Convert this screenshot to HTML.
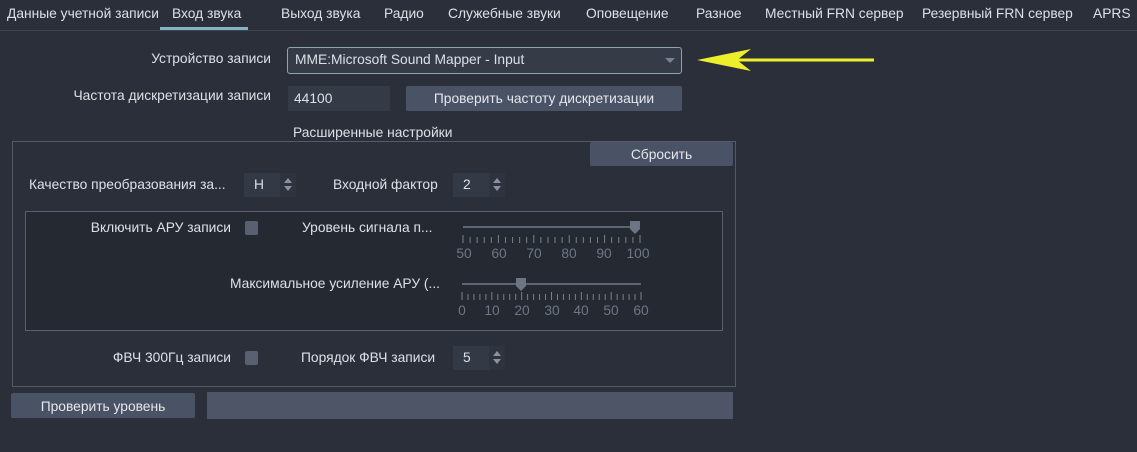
<!DOCTYPE html><html><head><meta charset="utf-8"><style>
body{margin:0;width:1137px;height:452px;background:#2b2f3a;font-family:"Liberation Sans","DejaVu Sans",sans-serif;font-size:13.8px;color:#dde0e6;position:relative;overflow:hidden}
.a{position:absolute;white-space:nowrap}
.btn{position:absolute;background:#4a5265;border-radius:2px;text-align:center;color:#e4e7ec}
.inp{position:absolute;background:#353a47}
.cb{position:absolute;width:13px;height:14px;background:#586072;border-radius:2px}
.spin{position:absolute;background:#343946;width:52px;height:24px}
.spin span{position:absolute;left:10px;top:4px}
.spin i{position:absolute;right:0;top:0;width:16px;height:24px;background:#2e333e}
.spin i:before{content:"";position:absolute;left:4px;top:5px;border:4px solid transparent;border-bottom:5px solid #8a91a0;border-top:0}
.spin i:after{content:"";position:absolute;left:4px;top:13px;border:4px solid transparent;border-top:5px solid #8a91a0;border-bottom:0}
.tk{position:absolute;color:#6e7586;transform:translateX(-50%)}
</style></head><body>
<div class="a" style="left:7px;top:6px">Данные учетной записи</div>
<div class="a" style="left:172px;top:6px">Вход звука</div>
<div class="a" style="left:281px;top:6px">Выход звука</div>
<div class="a" style="left:384px;top:6px">Радио</div>
<div class="a" style="left:448px;top:6px">Служебные звуки</div>
<div class="a" style="left:586px;top:6px">Оповещение</div>
<div class="a" style="left:696px;top:6px">Разное</div>
<div class="a" style="left:765px;top:6px">Местный FRN сервер</div>
<div class="a" style="left:922px;top:6px">Резервный FRN сервер</div>
<div class="a" style="left:1093px;top:6px">APRS</div>
<div class="a" style="left:0;top:30px;width:1137px;height:1px;background:#3e4451"></div>
<div class="a" style="left:160px;top:27px;width:88px;height:3px;background:#82b4c6"></div>

<div class="a" style="right:866px;top:51px">Устройство записи</div>
<div class="inp" style="left:287px;top:47px;width:393px;height:25px;border:1px solid #8ea4b1;border-radius:3px;background:#363b48"><span class="a" style="left:7px;top:4px">MME:Microsoft Sound Mapper - Input</span><span class="a" style="right:6px;top:10px;border:5px solid transparent;border-top:5px solid #7a8190;border-bottom:0"></span></div>
<svg class="a" style="left:690px;top:44px" width="190" height="32"><path d="M14 16 L184 16" stroke="#ecef2a" stroke-width="3"/><path d="M7 16 L61 5 L47 16 L61 27 Z" fill="#ecef2a"/></svg>
<div class="a" style="right:866px;top:88px">Частота дискретизации записи</div>
<div class="inp" style="left:288px;top:86px;width:102px;height:25px"><span class="a" style="left:6px;top:5px">44100</span></div>
<div class="btn" style="left:406px;top:86px;width:276px;height:25px;line-height:26px">Проверить частоту дискретизации</div>
<div class="a" style="left:293px;top:125px">Расширенные настройки</div>
<div class="a" style="left:12px;top:141px;width:722px;height:244px;border:1px solid #545a67"></div>
<div class="btn" style="left:590px;top:142px;width:143px;height:24px;line-height:25px">Сбросить</div>
<div class="a" style="left:29px;top:177px">Качество преобразования за...</div>
<div class="spin" style="left:244px;top:173px"><span>H</span><i></i></div>
<div class="a" style="left:333px;top:177px">Входной фактор</div>
<div class="spin" style="left:453px;top:173px"><span>2</span><i></i></div>
<div class="a" style="left:25px;top:211px;width:696px;height:118px;background:#252932;border:1px solid #5a606c"></div>
<div class="a" style="right:906px;top:220px">Включить АРУ записи</div>
<div class="cb" style="left:245px;top:221px"></div>
<div class="a" style="left:302px;top:220px">Уровень сигнала п...</div>
<svg class="a" style="left:455px;top:218px" width="200" height="105">
<line x1="8" y1="9" x2="185" y2="9" stroke="#5d6472" stroke-width="2"/>
<path d="M175 3h10v8l-5 5l-5-5z" fill="#6d7483"/>
<line x1="7" y1="66" x2="186" y2="66" stroke="#5d6472" stroke-width="2"/>
<path d="M61 60h10v8l-5 5l-5-5z" fill="#6d7483"/>
</svg>
<svg class="a" style="left:455px;top:218px" width="200" height="105" id="ticks"></svg>
<div class="tk" style="left:464px;top:246px">50</div><div class="tk" style="left:499px;top:246px">60</div><div class="tk" style="left:534px;top:246px">70</div><div class="tk" style="left:569px;top:246px">80</div><div class="tk" style="left:604px;top:246px">90</div><div class="tk" style="left:638px;top:246px">100</div>
<div class="a" style="left:230px;top:276px">Максимальное усиление АРУ (...</div>
<div class="tk" style="left:462px;top:303px">0</div><div class="tk" style="left:492px;top:303px">10</div><div class="tk" style="left:522px;top:303px">20</div><div class="tk" style="left:552px;top:303px">30</div><div class="tk" style="left:581px;top:303px">40</div><div class="tk" style="left:611px;top:303px">50</div><div class="tk" style="left:641px;top:303px">60</div>
<div class="a" style="right:906px;top:350px">ФВЧ 300Гц записи</div>
<div class="cb" style="left:245px;top:351px"></div>
<div class="a" style="left:301px;top:350px">Порядок ФВЧ записи</div>
<div class="spin" style="left:453px;top:346px"><span>5</span><i></i></div>
<div class="btn" style="left:11px;top:393px;width:184px;height:25px;line-height:27px">Проверить уровень</div>
<div class="a" style="left:207px;top:392px;width:526px;height:27px;background:#4d5566"></div>
<script>
var s=document.getElementById('ticks'),h='';
for(var i=0;i<=25;i++){var x=8+i*177/25;h+='<line x1="'+x+'" y1="'+(i%5?19:17)+'" x2="'+x+'" y2="25" stroke="#7a8190"/>';}
for(var i=0;i<=30;i++){var x=7+i*179/30;h+='<line x1="'+x+'" y1="'+(i%5?76:74)+'" x2="'+x+'" y2="82" stroke="#7a8190"/>';}
s.innerHTML=h;
</script>
</body></html>
